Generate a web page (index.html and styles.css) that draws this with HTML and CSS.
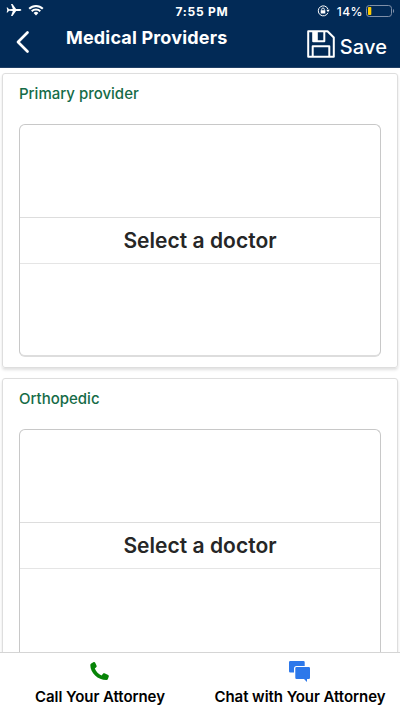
FILE: index.html
```html
<!DOCTYPE html>
<html lang="en">
<head>
<meta charset="utf-8">
<meta name="viewport" content="width=device-width, initial-scale=1">
<title>Medical Providers</title>
<link rel="stylesheet" href="styles.css">
</head>
<body>
<div class="app">
  <header class="header">
    <div class="status">
      <div class="status-left">
        <svg width="16" height="14" viewBox="0 0 16 14"><path fill="#fff" d="M15.3 7c0 .6-.8.9-1.7.9h-3.500L6.500 13H5l1.800-5.100-3.800-.2L1.600 9.500H.6L1.300 7 .6 4.500h1l1.400 1.800 3.800-.2L5 1h1.500l3.600 5.100h3.500c.9 0 1.700.3 1.700.9z"/></svg>
        <svg width="16" height="12" viewBox="0 0 16 12"><g fill="none" stroke="#fff" stroke-width="2"><path d="M1.200 4.700a9.600 9.600 0 0 1 13.600 0"/><path d="M3.700 7.300a6.100 6.100 0 0 1 8.600 0"/></g><path fill="#fff" d="M8 11.500 5.600 9a3.400 3.400 0 0 1 4.800 0z"/></svg>
      </div>
      <span class="time">7:55 PM</span>
      <div class="status-right">
        <svg class="lock" width="13" height="12" viewBox="0 0 13 12"><path fill="none" stroke="#fff" stroke-width="1" d="M10.900 7.800A5 5 0 1 1 11 4.200"/><path fill="#fff" d="M9.300 4.700h3.400L11 7.300zM3.700 5.300h4.600v3.300H3.700z"/><path fill="none" stroke="#fff" stroke-width=".9" d="M4.700 5.500V4.300a1.300 1.300 0 0 1 2.600 0v1.200"/></svg>
        <span class="percent">14%</span>
        <svg width="29" height="13" viewBox="0 0 29 13"><rect x=".5" y=".5" width="25" height="11" rx="2.800" fill="none" stroke="#8090a8"/><rect x="2" y="2" width="3.300" height="8" rx=".7" fill="#fc0"/><path fill="#8090a8" d="M27 4c1.500.5 1.500 3.500 0 4z"/></svg>
      </div>
    </div>
    <div class="nav">
      <svg class="back" width="14" height="24" viewBox="0 0 14 24"><path d="M11.500 2.500 2 12l9.500 9.500" fill="none" stroke="#fff" stroke-width="2.700" stroke-linecap="round" stroke-linejoin="round"/></svg>
      <h1 class="title">Medical Providers</h1>
      <div class="save">
        <svg width="28" height="28" viewBox="0 0 28 28"><g fill="none" stroke="#fff" stroke-width="2" stroke-linejoin="round"><path d="M1.200 1.200h19.300l6.300 6.300v19.300H1.200z"/><path d="M5.700 26.500V16.300h16.600v10.200"/><path d="M6.200 1.500v9.700h11.100V1.500"/></g><path fill="#fff" d="M6 1h4.800v10H6z"/></svg>
        <span class="save-text">Save</span>
      </div>
    </div>
  </header>
  <main class="content">
    <section class="card">
      <h2 class="label">Primary provider</h2>
      <div class="picker"><div class="choice"><span>Select a doctor</span></div></div>
    </section>
    <section class="card">
      <h2 class="label">Orthopedic</h2>
      <div class="picker"><div class="choice"><span>Select a doctor</span></div></div>
    </section>
  </main>
  <footer class="footer">
    <div class="action">
      <svg width="22" height="22" viewBox="0 0 22 22"><path fill="#078407" d="M2.200 2.500 4.700 1.100c.6-.3 1.200 0 1.500.6l1.400 3c.3.600.1 1.100-.4 1.500L5.800 7.400c1.400 3.300 3.600 5.600 6.800 7l1.400-1.700c.4-.5.900-.6 1.500-.4l3.700 1.700c.6.300.8.900.6 1.500l-.9 2.600c-.2.600-.7 1-1.400 1C8.800 19.100 1.400 11.900 1.300 4c0-.6.300-1.200.9-1.500z"/></svg>
      <span class="call-text">Call Your Attorney</span>
    </div>
    <div class="action">
      <svg width="22" height="22" viewBox="0 0 22 22"><path fill="#2d78ea" d="M1.200 0h13.300a1.200 1.200 0 0 1 1.200 1.200V5H7.500A2.500 2.500 0 0 0 5 7.500V11.500H1.200A1.200 1.200 0 0 1 0 10.300V1.200A1.200 1.200 0 0 1 1.200 0z"/><path fill="#2d78ea" d="M7.500 6h12.300A1.200 1.200 0 0 1 21 7.200v9.600a1.200 1.200 0 0 1-1.200 1.200H18v3L15 18H7.500a1.200 1.200 0 0 1-1.200-1.200V7.200A1.200 1.200 0 0 1 7.500 6z"/></svg>
      <span class="chat-text">Chat with Your Attorney</span>
    </div>
  </footer>
</div>
</body>
</html>
```

FILE: styles.css
```css
* { box-sizing: border-box; }
body { margin: 0; font-family: Inter, "Liberation Sans", sans-serif; background: #fff; }
svg { display: block; flex: none; }
.app { display: flex; flex-direction: column; height: 711px; overflow: hidden; }
.header { flex: none; height: 68px; background: #022a56; color: #fff; border-bottom: 1px solid #203f65; }
.status { display: grid; grid-template-columns: 1fr auto 1fr; align-items: center; height: 22px; padding: 0 5px 0 6px; }
.status-left { display: flex; align-items: center; gap: 6px; margin-top: -2px; }
.time { margin: 0 -3px 0 0; font-size: 12px; font-weight: 700; letter-spacing: .75px; white-space: nowrap; }
.status-right { display: flex; align-items: center; justify-content: flex-end; }
.lock { margin-right: 7px; }
.percent { font-size: 12px; font-weight: 500; letter-spacing: .5px; margin-right: 3px; }
.nav { display: flex; height: 45px; padding: 0 13px 0 16px; }
.back { margin-top: 8px; }
.title { margin: 5px 0 0 36px; font-size: 18px; line-height: 22px; font-weight: 700; letter-spacing: .17px; white-space: nowrap; }
.save { display: flex; margin: 8px 0 0 auto; gap: 5px; }
.save-text { font-size: 20px; line-height: 24px; font-weight: 500; letter-spacing: .1px; margin-top: 5px; }
.content { flex: 1; min-height: 0; overflow: hidden; padding: 5px 2px 0; }
.card { height: 295px; margin-bottom: 10px; padding: 10px 16px 0; border: 1px solid #dedede; border-radius: 3px; box-shadow: 0 2px 3px rgba(0,0,0,.12); }
.label { margin: 0 0 21px; font-size: 15px; line-height: 19px; font-weight: 500; color: #156b47; }
.picker { height: 233px; border: 1px solid #c8c8c8; border-bottom-width: 2px; border-bottom-color: #ddd; border-radius: 6px; padding-top: 92px; }
.choice { display: flex; align-items: center; justify-content: center; height: 47px; border-top: 1px solid #ddd; border-bottom: 1px solid #e5e5e5; color: #262626; font-size: 21px; font-weight: 600; letter-spacing: .03px; white-space: nowrap; }
.footer { flex: none; display: grid; grid-template-columns: 1fr 1fr; height: 59px; border-top: 1px solid #d5d5d5; background: #fff; }
.action { display: flex; flex-direction: column; align-items: center; padding-top: 8px; color: #000; font-size: 15px; line-height: 20px; font-weight: 600; letter-spacing: -.06px; white-space: nowrap; }
.call-text, .chat-text { margin-top: 4px; }
```
